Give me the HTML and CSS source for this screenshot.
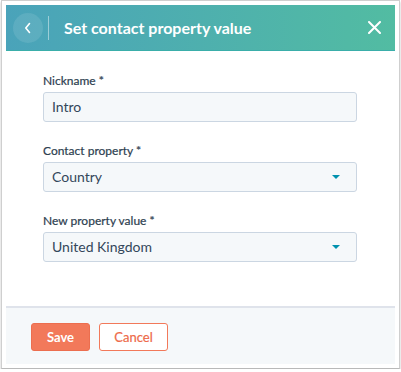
FILE: index.html
```html
<!DOCTYPE html>
<html>
<head>
<meta charset="utf-8">
<link rel="stylesheet" href="styles.css">
</head>
<body>
<div class="frame">
  <div class="dialog">
    <div class="header">
      <button class="back" aria-label="Back">
        <svg width="8" height="12" viewBox="0 0 8 12"><path d="M5.5 1.5 L1.8 6 L5.5 10.5" fill="none" stroke="#fff" stroke-width="1.6" stroke-linecap="round" stroke-linejoin="round"/></svg>
      </button>
      <span class="divider"></span>
      <h1 class="title">Set contact property value</h1>
      <button class="close" aria-label="Close">
        <svg width="13" height="13" viewBox="0 0 13 13"><path d="M1 1 L12 12 M12 1 L1 12" stroke="#fff" stroke-width="2" stroke-linecap="round"/></svg>
      </button>
    </div>
    <div class="body">
      <div class="field">
        <label class="label">Nickname *</label>
        <div class="input">Intro</div>
      </div>
      <div class="field">
        <label class="label">Contact property *</label>
        <div class="input select">Country<span class="caret"></span></div>
      </div>
      <div class="field">
        <label class="label">New property value *</label>
        <div class="input select">United Kingdom<span class="caret"></span></div>
      </div>
    </div>
    <div class="footer">
      <button class="btn primary">Save</button>
      <button class="btn secondary">Cancel</button>
    </div>
  </div>
</div>
</body>
</html>
```
FILE: styles.css
```css
html, body {
  margin: 0;
  padding: 0;
  background: #fff;
}
body {
  font-family: Lato, "Open Sans", sans-serif;
  color: #33475b;
}
.frame {
  margin-left: 1px;
  width: 399px;
  height: 369px;
  border: 1px solid #cfcfcf;
  border-bottom-color: #b9b9b9;
  box-shadow: 0 2px 2px rgba(0, 0, 0, 0.25);
  padding: 4px;
  box-sizing: border-box;
  background: #fff;
  display: flex;
}
.dialog {
  flex: 1;
  display: flex;
  flex-direction: column;
  background: #fff;
}
.header {
  height: 46px;
  box-sizing: border-box;
  background: linear-gradient(to right, #4aa3ba, #52bca2);
  border-bottom: 1px solid #3aaeaa;
  display: flex;
  align-items: center;
  padding: 0 14px 0 7px;
}
.back {
  width: 30px;
  height: 30px;
  border-radius: 50%;
  border: none;
  background: rgba(255, 255, 255, 0.1);
  display: flex;
  align-items: center;
  justify-content: center;
  padding: 0;
}
.divider {
  width: 1px;
  height: 24px;
  background: rgba(255, 255, 255, 0.45);
  margin-left: 5px;
  margin-right: 15px;
}
.title {
  margin: 0;
  flex: 1;
  font-size: 16px;
  font-weight: 700;
  color: #fff;
}
.close {
  border: none;
  background: none;
  padding: 0;
  width: 13px;
  height: 13px;
  display: flex;
}
.body {
  flex: 1;
  padding: 22px 38px 0 37px;
  display: flex;
  flex-direction: column;
  gap: 21px;
}
.field {
  display: flex;
  flex-direction: column;
  gap: 3px;
}
.label {
  font-size: 12px;
  line-height: 16px;
  font-weight: 400;
  color: #2d3e50;
  -webkit-text-stroke: 0.2px #2d3e50;
}
.input {
  height: 30px;
  box-sizing: border-box;
  border: 1px solid #cbd6e2;
  border-radius: 3px;
  background: #f5f8fa;
  font-size: 14px;
  line-height: 28px;
  padding: 0 8px;
  color: #33475b;
  display: flex;
  align-items: center;
}
.select {
  justify-content: space-between;
}
.caret {
  width: 0;
  height: 0;
  border-left: 4px solid transparent;
  border-right: 4px solid transparent;
  border-top: 4px solid #0091ae;
  margin-right: 8px;
}
.footer {
  height: 58px;
  box-sizing: border-box;
  border-top: 2px solid #dfe3eb;
  background: #f5f8fa;
  display: flex;
  align-items: flex-start;
  padding: 15px 25px 0 25px;
  gap: 9px;
}
.btn {
  height: 28px;
  box-sizing: border-box;
  border-radius: 3px;
  font-family: Lato, "Open Sans", sans-serif;
  font-size: 13px;
  font-weight: 700;
  padding: 0;
}
.primary {
  width: 59px;
  background: #f2795a;
  border: 1px solid #ec6e4f;
  color: #fff;
}
.secondary {
  width: 69px;
  background: #fff;
  border: 1px solid #f2795a;
  color: #ee6a4a;
  font-weight: 400;
  -webkit-text-stroke: 0.2px #ee6a4a;
}
```
